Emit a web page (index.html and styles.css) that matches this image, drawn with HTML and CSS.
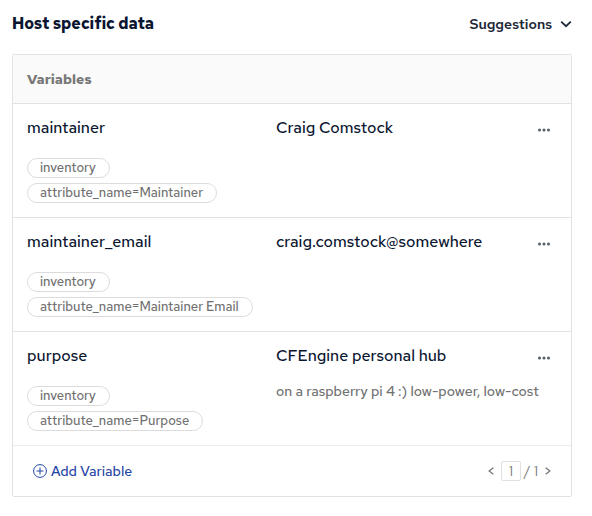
FILE: index.html
```html
<!DOCTYPE html>
<html lang="en">
<head>
<meta charset="utf-8">
<meta name="viewport" content="width=device-width, initial-scale=1">
<title>Host specific data</title>
<link rel="stylesheet" href="styles.css">
</head>
<body>
<main class="page">
  <header class="page-header">
    <h1 class="title">Host specific data</h1>
    <button class="suggestions" type="button">
      Suggestions
      <svg width="12" height="8" viewBox="0 0 12 8" aria-hidden="true"><path d="M1.2 1.700 6 6.200l4.800-4.500" fill="none" stroke="currentColor" stroke-width="1.800"/></svg>
    </button>
  </header>
  <section class="panel">
    <table class="variables">
      <colgroup><col class="col-name"><col><col class="col-menu"></colgroup>
      <thead>
        <tr><th colspan="3" scope="colgroup">Variables</th></tr>
      </thead>
      <tbody>
        <tr>
          <td><div class="name">maintainer</div>
            <ul class="tags"><li class="tag">inventory</li><li class="tag">attribute_name=Maintainer</li></ul></td>
          <td><div class="value">Craig Comstock</div></td>
          <td><button class="menu" type="button" aria-label="Actions"><svg width="14" height="4" viewBox="0 0 14 4" aria-hidden="true"><circle cx="2.500" cy="2" r="1.500"/><circle cx="7" cy="2" r="1.500"/><circle cx="11.500" cy="2" r="1.500"/></svg></button></td>
        </tr>
        <tr>
          <td><div class="name">maintainer_email</div>
            <ul class="tags"><li class="tag">inventory</li><li class="tag">attribute_name=Maintainer Email</li></ul></td>
          <td><div class="value">craig.comstock@somewhere</div></td>
          <td><button class="menu" type="button" aria-label="Actions"><svg width="14" height="4" viewBox="0 0 14 4" aria-hidden="true"><circle cx="2.500" cy="2" r="1.500"/><circle cx="7" cy="2" r="1.500"/><circle cx="11.500" cy="2" r="1.500"/></svg></button></td>
        </tr>
        <tr>
          <td><div class="name">purpose</div>
            <ul class="tags"><li class="tag">inventory</li><li class="tag">attribute_name=Purpose</li></ul></td>
          <td><div class="value">CFEngine personal hub</div><p class="note">on a raspberry pi 4 :) low-power, low-cost</p></td>
          <td><button class="menu" type="button" aria-label="Actions"><svg width="14" height="4" viewBox="0 0 14 4" aria-hidden="true"><circle cx="2.500" cy="2" r="1.500"/><circle cx="7" cy="2" r="1.500"/><circle cx="11.500" cy="2" r="1.500"/></svg></button></td>
        </tr>
      </tbody>
    </table>
    <footer class="panel-footer">
      <button class="add" type="button">
        <svg width="14" height="14" viewBox="0 0 14 14" fill="none" stroke="currentColor" aria-hidden="true"><circle cx="7" cy="7" r="6.400"/><path d="M7 3.500v7M3.500 7h7"/></svg>
        Add Variable
      </button>
      <nav class="pager" aria-label="Pages">
        <button class="step" type="button" aria-label="Previous page"><svg width="6" height="8" viewBox="0 0 6 8" aria-hidden="true"><path d="M5.300.8 1.200 4l4.100 3.200" fill="none" stroke="currentColor" stroke-width="1.300"/></svg></button>
        <span class="position"><input class="page-input" type="text" value="1" aria-label="Page"><span>/ 1</span></span>
        <button class="step" type="button" aria-label="Next page"><svg width="6" height="8" viewBox="0 0 6 8" aria-hidden="true"><path d="M.7.8 4.800 4 .7 7.200" fill="none" stroke="currentColor" stroke-width="1.300"/></svg></button>
      </nav>
    </footer>
  </section>
</main>
</body>
</html>
```

FILE: styles.css
```css
* {
  box-sizing: border-box;
}

body {
  margin: 0;
  background: #fff;
  color: #0a1530;
  font-family: "Red Hat Text", "Noto Sans", sans-serif;
  font-size: 14px;
  font-weight: 500;
  line-height: 20px;
}

button,
input {
  font: inherit;
  color: inherit;
}

button {
  display: inline-flex;
  align-items: center;
  padding: 0;
  border: 0;
  background: none;
  cursor: pointer;
}

.page {
  padding: 12px 20px 12px 12px;
}

.page-header {
  display: flex;
  align-items: center;
  justify-content: space-between;
  margin-bottom: 18px;
}

.title {
  margin: 0;
  font-size: 16px;
  font-weight: 700;
  line-height: 24px;
}

.suggestions {
  gap: 8px;
  color: #1d2738;
  font-weight: 600;
}

.panel {
  border: 1px solid #e2e2e2;
  border-radius: 2px;
}

.variables {
  width: 100%;
  border-collapse: separate;
  border-spacing: 0;
  table-layout: fixed;
}

.col-name {
  width: 249px;
}

.col-menu {
  width: 34px;
}

.variables th {
  height: 49px;
  padding: 0 14px;
  background: #fafafa;
  border-bottom: 1px solid #e2e2e2;
  color: #777;
  font-weight: 700;
  text-align: left;
}

.variables td {
  height: 114px;
  padding: 12px 0 14px 14px;
  border-bottom: 1px solid #e2e2e2;
  vertical-align: top;
}

.variables tr:last-child td {
  border-bottom-color: #ececec;
}

.variables td:last-child {
  padding-left: 0;
}

.name,
.value {
  font-size: 16px;
  line-height: 24px;
}

.tags {
  display: flex;
  flex-direction: column;
  align-items: flex-start;
  gap: 5px;
  margin: 18px 0 0;
  padding: 0;
  list-style: none;
}

.tag {
  padding: 0 13px 0 12px;
  border: 1px solid #dcdcdc;
  border-radius: 10px;
  color: #707070;
  font-size: 13px;
  line-height: 18px;
  white-space: nowrap;
}

.note {
  margin: 13px 0 0;
  color: #707070;
  white-space: nowrap;
}

.menu {
  height: 28px;
  fill: #515b6b;
}

.panel-footer {
  display: flex;
  align-items: center;
  justify-content: space-between;
  padding: 15px 20px;
}

.add {
  gap: 4px;
  color: #1f45a5;
}

.pager {
  display: flex;
  align-items: center;
  gap: 7px;
  color: #777;
  font-weight: 400;
}

.position {
  display: flex;
  align-items: center;
  gap: 3px;
}

.page-input {
  width: 20px;
  height: 20px;
  padding: 0;
  border: 1px solid #e0e0e0;
  border-radius: 2px;
  background: #fff;
  text-align: center;
}
```
